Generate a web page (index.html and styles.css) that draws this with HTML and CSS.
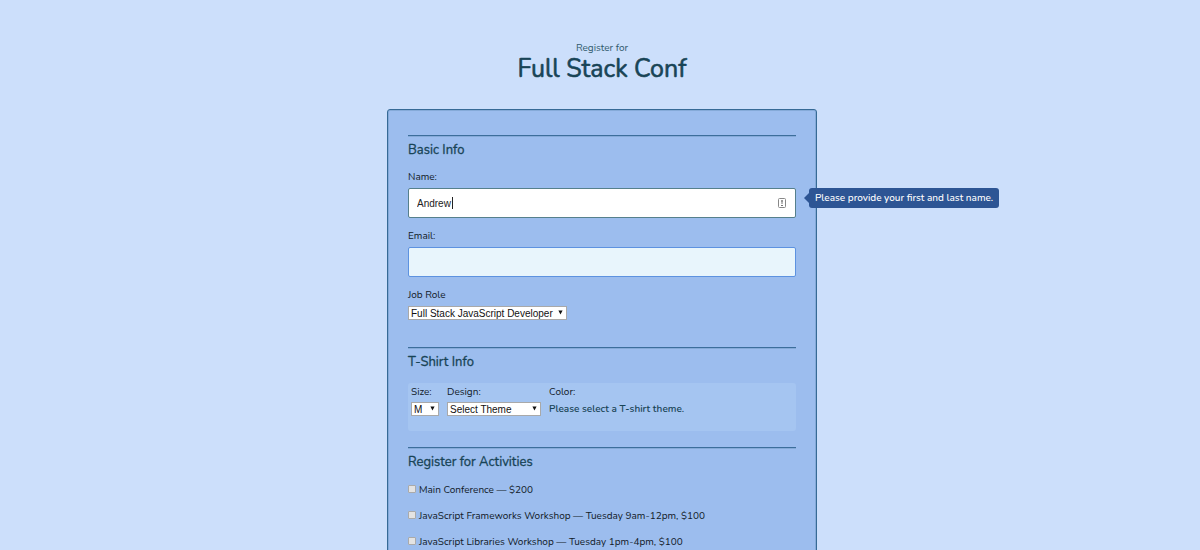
FILE: index.html
```html
<!DOCTYPE html>
<html lang="en">
<head>
<meta charset="utf-8">
<title>Full Stack Conf</title>
<link rel="stylesheet" href="styles.css">
</head>
<body>
<div class="container">
  <header class="header">
    <span class="kicker">Register for</span>
    <h1 class="title">Full Stack Conf</h1>
  </header>
  <form class="form">
    <fieldset class="section section-basic">
      <legend class="legend">Basic Info</legend>
      <label class="label" for="name">Name:</label>
      <div class="field">
        <input class="input input-focus" type="text" id="name" value="Andrew">
        <span class="caret"></span>
        <svg class="autofill" viewBox="0 0 8 10" aria-hidden="true"><rect x=".5" y=".5" width="7" height="9" rx="1" fill="#fff" stroke="#888"/><path d="M4 2v4M3 3h2M3 7.500h2" stroke="#777" fill="none"/></svg>
        <span class="tooltip">Please provide your first and last name.</span>
      </div>
      <label class="label" for="mail">Email:</label>
      <div class="field">
        <input class="input" type="email" id="mail">
      </div>
      <label class="label" for="role">Job Role</label>
      <span class="select-wrap select-role">
        <select class="select" id="role"><option>Full Stack JavaScript Developer</option></select>
        <svg class="arrow" viewBox="0 0 5 5" aria-hidden="true"><path d="M.4.5h4.200L2.500 4.500z" fill="#111"/></svg>
      </span>
    </fieldset>
    <fieldset class="section section-shirt">
      <legend class="legend">T-Shirt Info</legend>
      <div class="shirt">
        <div class="shirt-size">
          <label class="shirt-label" for="size">Size:</label>
          <span class="select-wrap">
            <select class="select" id="size"><option>M</option></select>
            <svg class="arrow" viewBox="0 0 5 5" aria-hidden="true"><path d="M.4.5h4.200L2.500 4.500z" fill="#111"/></svg>
          </span>
        </div>
        <div class="shirt-design">
          <label class="shirt-label" for="design">Design:</label>
          <span class="select-wrap">
            <select class="select" id="design"><option>Select Theme</option></select>
            <svg class="arrow" viewBox="0 0 5 5" aria-hidden="true"><path d="M.4.5h4.200L2.500 4.500z" fill="#111"/></svg>
          </span>
        </div>
        <div class="shirt-color">
          <span class="shirt-label">Color:</span>
          <p class="hint">Please select a T-shirt theme.</p>
        </div>
      </div>
    </fieldset>
    <fieldset class="section">
      <legend class="legend">Register for Activities</legend>
      <div class="activities">
        <label class="activity"><input class="check" type="checkbox">Main Conference — $200</label>
        <label class="activity"><input class="check" type="checkbox">JavaScript Frameworks Workshop — Tuesday 9am-12pm, $100</label>
        <label class="activity"><input class="check" type="checkbox">JavaScript Libraries Workshop — Tuesday 1pm-4pm, $100</label>
      </div>
    </fieldset>
  </form>
</div>
</body>
</html>
```
FILE: styles.css
```css
* {
  box-sizing: border-box;
}

html {
  overflow: hidden;
}

body {
  margin: 0;
  padding-left: 4px;
  background: #ccdffb;
  color: #111a28;
  font-family: Nunito, Lato, "Open Sans", sans-serif;
  font-size: 10px;
  line-height: 14px;
}

.container {
  max-width: 430px;
  margin: 0 auto;
  padding-top: 41px;
}

.header {
  text-align: center;
  color: #184456;
  margin-bottom: 26px;
}

.kicker {
  display: block;
  color: #2f5a6c;
}

.title {
  margin: 0;
  font-size: 25px;
  line-height: 28px;
  font-weight: 400;
  -webkit-text-stroke: 0.6px #184456;
}

.form {
  padding: 25px 20px 12px;
  border: 1px solid #366a96;
  border-radius: 3px;
  box-shadow: inset 0 0 0 1px #85aad8;
  background: #9cbdee;
}

.section {
  display: block;
  margin: 0;
  padding: 0;
  border: 0;
  border-top: 1px solid #3c6e9b;
  box-shadow: inset 0 1px 0 #85aad8;
  min-width: 0;
}

.section-basic {
  margin-bottom: 27px;
}

.section-shirt {
  margin-bottom: 16px;
}

.legend {
  float: left;
  width: 100%;
  padding: 5px 0 0;
  margin-bottom: 12px;
  font-size: 13px;
  line-height: 18px;
  color: #184456;
  -webkit-text-stroke: 0.3px #184456;
}

.label {
  display: block;
  clear: both;
  line-height: 12px;
  margin-bottom: 5px;
}

.field {
  position: relative;
  margin-bottom: 12px;
}

.input {
  display: block;
  width: 100%;
  height: 30px;
  padding: 0 8px;
  border: 1px solid #5d92e0;
  border-radius: 2px;
  outline: none;
  background: #e8f5fc;
  color: #222;
  font: 10px "Liberation Sans", Arial, sans-serif;
}

.input-focus {
  background: #fff;
  border-color: #56808c;
}

.caret {
  position: absolute;
  left: 44px;
  top: 9px;
  width: 1px;
  height: 12px;
  background: #222;
}

.autofill {
  position: absolute;
  right: 10px;
  top: 10px;
  width: 8px;
  height: 10px;
}

.tooltip {
  position: absolute;
  left: calc(100% + 13px);
  top: 0;
  padding: 3px 6px;
  border-radius: 3px;
  background: #2d5594;
  color: #fff;
  white-space: nowrap;
  font-weight: 500;
}

.tooltip::before {
  content: "";
  position: absolute;
  right: 100%;
  top: 5px;
  border: 5px solid transparent;
  border-left: 0;
  border-right-color: #2d5594;
}

.select-wrap {
  display: block;
  position: relative;
}

.select-role {
  width: 159px;
}

.select {
  appearance: none;
  display: block;
  width: 100%;
  height: 14px;
  padding: 0 2px;
  border: 1px solid #a9a9a9;
  border-radius: 0;
  background: #fff;
  color: #111;
  font: 10px "Liberation Sans", Arial, sans-serif;
}

.arrow {
  position: absolute;
  right: 4px;
  top: 4px;
  width: 5px;
  height: 5px;
  pointer-events: none;
}

.shirt {
  clear: both;
  display: flex;
  gap: 8px;
  min-height: 48px;
  padding: 2px 3px;
  border-radius: 3px;
  background: #a5c5f1;
}

.shirt-size {
  width: 28px;
}

.shirt-design {
  width: 94px;
}

.shirt-label {
  display: block;
  margin-bottom: 3px;
}

.hint {
  margin: 0;
  color: #184456;
  font-weight: 600;
}

.activities {
  clear: both;
  display: flex;
  flex-direction: column;
  gap: 12px;
}

.activity {
  display: flex;
  align-items: center;
  gap: 3px;
}

.check {
  appearance: none;
  width: 8px;
  height: 8px;
  margin: 0 0 3px;
  border: 1px solid #aaa;
  border-radius: 1px;
  background: #e3e3e3;
}
```
